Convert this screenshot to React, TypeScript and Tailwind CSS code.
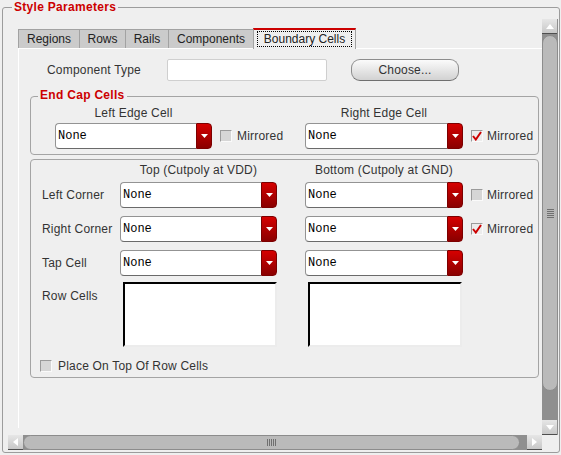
import React from "react";

function Combo({ className = "" }: { className?: string }) {
  return (
    <div className={`flex h-[26px] ${className}`}>
      <div className="flex flex-1 items-center rounded-l-[4px] border border-r-0 border-[#939393] border-b-[#6a6a6a] bg-white pl-[2px] font-['Liberation_Mono',monospace] text-[12px] leading-[14px] text-black">
        None
      </div>
      <div className="flex w-[16px] items-center justify-center rounded-r-[4px] border border-[#7c0000] bg-gradient-to-b from-[#d60000] to-[#8a0000]">
        <svg width="7" height="5" viewBox="0 0 7 5">
          <path d="M0 0h7L3.5 4z" fill="#fff" />
        </svg>
      </div>
    </div>
  );
}

function Check({ on = false }: { on?: boolean }) {
  return (
    <span
      className={`flex h-[12px] w-[12px] shrink-0 items-center justify-center border border-[#9a9a9a] border-b-[#fafafa] border-r-[#fafafa] ${
        on ? "bg-[#ececec]" : "bg-[#d6d6d6]"
      }`}
    >
      {on && (
        <svg width="10" height="10" viewBox="0 0 10 10">
          <path d="M1 5L3.8 8.5L9 1" fill="none" stroke="#cc0000" strokeWidth="2" />
        </svg>
      )}
    </span>
  );
}

function ScrollBtn({ dir }: { dir: "up" | "down" | "left" | "right" }) {
  const paths = {
    up: "M0 5L4 0L8 5z",
    down: "M0 0L8 0L4 5z",
    left: "M5 0L5 8L0 4z",
    right: "M0 0L5 4L0 8z",
  };
  const wide = dir === "up" || dir === "down";
  return (
    <div className="flex h-[15px] w-[15px] shrink-0 items-center justify-center border-b border-b-[#4e4e4e] bg-gradient-to-b from-[#e6e6e6] to-[#c8c8c8]">
      <svg width={wide ? 8 : 5} height={wide ? 5 : 8} viewBox={wide ? "0 0 8 5" : "0 0 5 8"}>
        <path d={paths[dir]} fill="#fff" />
      </svg>
    </div>
  );
}

const tabs = [
  { name: "Regions", w: "w-[61px]" },
  { name: "Rows", w: "w-[46px]" },
  { name: "Rails", w: "w-[43px]" },
  { name: "Components", w: "w-[85px]" },
];

export default function App() {
  return (
    <div className="h-[455px] w-[561px] overflow-hidden bg-[#efefef] pl-[2px] pt-[7px] font-['Liberation_Sans',Arial,sans-serif] text-[12px] leading-[14px] text-[#333]">
      <div className="relative h-[446px] w-[558px] rounded-[3px] border border-[#9c9c9c] pl-[5px] pt-[11px]">
        <span className="absolute -top-[8px] left-[9px] bg-[#efefef] px-[2px] font-bold tracking-[0.3px] text-[#cc0000]">
          Style Parameters
        </span>

        <div className="flex">
          {/* viewport */}
          <div className="h-[416px] w-[534px] overflow-hidden pl-[10px] pt-[9px]">
            <div className="flex h-[20px] items-end">
              {tabs.map((t) => (
                <div
                  key={t.name}
                  className={`flex h-[19px] ${t.w} items-center justify-center border-l border-t border-[#a2a2a2] bg-[#cbcbcb] text-[#222]`}
                >
                  {t.name}
                </div>
              ))}
              <div className="relative z-10 -mb-[1px] flex h-[21px] w-[103px] items-start justify-center border-x border-t-2 border-x-[#a2a2a2] border-t-[#cc0000] bg-[#efefef] pt-[1px] text-[#222]">
                <span className="flex h-[16px] w-[95px] items-center justify-center border border-dotted border-black">
                  Boundary Cells
                </span>
              </div>
            </div>

            <div className="h-[380px] w-[540px] border-l border-t border-white">
              {/* component type */}
              <div className="mt-[10px] flex h-[22px] items-center pl-[28px]">
                <span className="w-[120px] tracking-[0.2px]">Component Type</span>
                <div className="h-[22px] w-[160px] rounded-[2px] border border-[#cfcfcf] bg-white" />
                <div className="ml-[24px] flex h-[22px] w-[108px] items-center justify-center rounded-[9px] border border-[#8d8d8d] border-b-[#6f6f6f] bg-gradient-to-b from-[#fbfbfb] to-[#d2d2d2] tracking-[0.2px]">
                  Choose...
                </div>
              </div>

              {/* end cap cells */}
              <div className="relative ml-[11px] mt-[15px] w-[509px] rounded-[4px] border border-[#a4a4a4] pb-[5px] pt-[9px]">
                <span className="absolute -top-[9px] left-[7px] bg-[#efefef] px-[2px] font-bold tracking-[0.3px] text-[#cc0000]">
                  End Cap Cells
                </span>
                <div className="flex pl-[24px]">
                  <div className="flex w-[250px] flex-col">
                    <div className="w-[157px] text-center tracking-[0.2px]">Left Edge Cell</div>
                    <div className="mt-[3px] flex items-center">
                      <Combo className="w-[157px]" />
                      <span className="ml-[8px]">
                        <Check />
                      </span>
                      <span className="ml-[5px] tracking-[0.2px]">Mirrored</span>
                    </div>
                  </div>
                  <div className="flex flex-col">
                    <div className="w-[158px] text-center tracking-[0.2px]">Right Edge Cell</div>
                    <div className="mt-[3px] flex items-center">
                      <Combo className="w-[158px]" />
                      <span className="ml-[8px]">
                        <Check on />
                      </span>
                      <span className="ml-[4px] tracking-[0.2px]">Mirrored</span>
                    </div>
                  </div>
                </div>
              </div>

              {/* corners */}
              <div className="ml-[11px] mt-[4px] w-[509px] rounded-[4px] border border-[#a4a4a4] pb-[4px] pt-[3px]">
                <div className="flex pl-[89px]">
                  <span className="w-[157px] text-center tracking-[0.2px]">Top (Cutpoly at VDD)</span>
                  <span className="ml-[28px] w-[158px] text-center tracking-[0.2px]">Bottom (Cutpoly at GND)</span>
                </div>

                <div className="mt-[5px] flex items-center">
                  <span className="w-[89px] pl-[11px] tracking-[0.2px]">Left Corner</span>
                  <Combo className="w-[157px]" />
                  <Combo className="ml-[28px] w-[158px]" />
                  <span className="ml-[8px]">
                    <Check />
                  </span>
                  <span className="ml-[4px] tracking-[0.2px]">Mirrored</span>
                </div>

                <div className="mt-[8px] flex items-center">
                  <span className="w-[89px] pl-[11px] tracking-[0.2px]">Right Corner</span>
                  <Combo className="w-[157px]" />
                  <Combo className="ml-[28px] w-[158px]" />
                  <span className="ml-[8px]">
                    <Check on />
                  </span>
                  <span className="ml-[4px] tracking-[0.2px]">Mirrored</span>
                </div>

                <div className="mt-[8px] flex items-center">
                  <span className="w-[89px] pl-[11px] tracking-[0.2px]">Tap Cell</span>
                  <Combo className="w-[157px]" />
                  <Combo className="ml-[28px] w-[158px]" />
                </div>

                <div className="mt-[6px] flex items-start">
                  <span className="w-[89px] pl-[11px] pt-[7px] tracking-[0.2px]">Row Cells</span>
                  <div className="ml-[3px] h-[65px] w-[154px] border-2 border-[#ececec] border-l-black border-t-black bg-white" />
                  <div className="ml-[31px] h-[65px] w-[154px] border-2 border-[#ececec] border-l-black border-t-black bg-white" />
                </div>

                <div className="mt-[12px] flex items-center pl-[9px]">
                  <Check />
                  <span className="ml-[6px] tracking-[0.2px]">Place On Top Of Row Cells</span>
                </div>
              </div>
            </div>
          </div>

          {/* vertical scrollbar */}
          <div className="flex h-[416px] w-[16px] flex-col bg-[#8f8f8f]">
            <ScrollBtn dir="up" />
            <div className="mt-[1px] flex h-[356px] items-center justify-center rounded-full border border-[#8c8c8c] bg-[#bababa]">
              <div className="flex flex-col gap-[1px]">
                {[0, 1, 2, 3, 4].map((i) => (
                  <div key={i} className="h-px w-[7px] bg-[#707070]" />
                ))}
              </div>
            </div>
            <div className="flex-1" />
            <ScrollBtn dir="down" />
          </div>
        </div>

        {/* horizontal scrollbar */}
        <div className="flex h-[15px] w-[534px] bg-[#8f8f8f]">
          <ScrollBtn dir="left" />
          <div className="flex w-[497px] items-center justify-center rounded-full border border-[#8c8c8c] bg-[#bababa]">
            <div className="flex gap-[1px]">
              {[0, 1, 2, 3, 4].map((i) => (
                <div key={i} className="h-[7px] w-px bg-[#707070]" />
              ))}
            </div>
          </div>
          <div className="flex-1" />
          <ScrollBtn dir="right" />
        </div>
      </div>
    </div>
  );
}
